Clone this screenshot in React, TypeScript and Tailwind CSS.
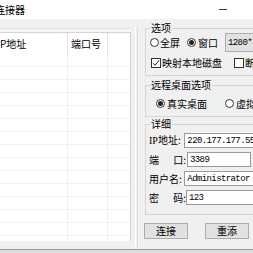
import React from 'react';

const cjk = "font-['Noto_Sans_CJK_SC',sans-serif]";
const mono = "font-['Liberation_Mono',monospace]";

function Radio({ checked = false }: { checked?: boolean }) {
  return (
    <span className="w-[9px] h-[9px] rounded-full border border-[#333] bg-white flex items-center justify-center shrink-0">
      {checked && <span className="w-[5px] h-[5px] rounded-full bg-[#222]" />}
    </span>
  );
}

function Check({ checked = false }: { checked?: boolean }) {
  return (
    <span className="w-[10px] h-[10px] border border-[#333] bg-white flex items-center justify-center shrink-0">
      {checked && (
        <svg width="8" height="8" viewBox="0 0 8 8" fill="none">
          <path d="M1 4.2 L3 6.2 L7 1.5" stroke="#222" strokeWidth="1" />
        </svg>
      )}
    </span>
  );
}

function Group({ label, className, children }: { label: string; className: string; children: React.ReactNode }) {
  return (
    <div className={`relative border border-[#d5d5d5] ${className}`}>
      <span className="absolute -top-[7px] left-[4px] bg-[#f0f0f0] px-[1px] text-[10px] leading-[12px]">{label}</span>
      {children}
    </div>
  );
}

function Field({ label, value, width }: { label: React.ReactNode; value: string; width: string }) {
  return (
    <div className="flex items-center h-[15px] mt-[4px] first:mt-0 pl-[3px]">
      <div className="w-[38px] flex text-[10px] leading-[12px]">{label}</div>
      <div className={`${width} h-[15px] bg-white border border-[#9a9a9a] flex items-center pl-[2px] ${mono} text-[9px] tracking-[-0.6px] whitespace-nowrap overflow-hidden`}>
        {value}
      </div>
    </div>
  );
}

export default function App() {
  const rows = Array.from({ length: 15 });
  return (
    <div className={`w-[253px] h-[253px] overflow-hidden bg-[#f0f0f0] text-black flex flex-col ${cjk}`}>
      <div className="h-[19px] bg-white flex items-center justify-between shrink-0">
        <span className="ml-[-5px] text-[10px] leading-[12px] whitespace-nowrap">连接器</span>
        <span className="mr-[26px] w-[8px] h-px bg-[#333]" />
      </div>

      <div className="h-[230px] flex shrink-0">
        <div className="w-[131px] flex flex-col pt-[9px] shrink-0">
          <div className="h-px bg-[#dcdcdc]" />
          <div className="h-[3px] bg-[#f6f6f6]" />
          <div className="h-[209px] bg-white border-t border-r border-[#d4d4d4] overflow-hidden flex flex-col">
            <div className="h-[21px] flex shrink-0 text-[10px] leading-[12px]">
              <div className="w-[68px] border-r border-[#e5e5e5] flex items-center">
                <span className="ml-[-3px] whitespace-nowrap">IP地址</span>
              </div>
              <div className="w-[40px] border-r border-[#e5e5e5] flex items-center pl-[3px]">端口号</div>
              <div className="flex-1" />
            </div>
            {rows.map((_, i) => (
              <div key={i} className="h-[13px] flex shrink-0 border-b border-[#f0f0f0]">
                <div className="w-[68px] border-r border-[#f0f0f0]" />
                <div className="w-[40px] border-r border-[#f0f0f0]" />
                <div className="flex-1" />
              </div>
            ))}
          </div>
        </div>

        <div className="w-[14px] flex pt-[8px] shrink-0">
          <div className="w-[4px]" />
          <div className="w-px bg-white" />
          <div className="w-px" />
          <div className="w-px bg-[#dcdcdc]" />
        </div>

        <div className="w-[115px] flex flex-col shrink-0 text-[10px] leading-[12px]">
          <Group label="选项" className="mt-[9px] h-[48px]">
            <div className="mt-[4px] h-[19px] flex items-center pl-[4px] whitespace-nowrap">
              <Radio />
              <span className="ml-[1px]">全屏</span>
              <span className="ml-[7px]"><Radio checked /></span>
              <span className="ml-[2px]">窗口</span>
              <div className={`ml-[7px] w-[50px] h-[19px] shrink-0 bg-[#e1e1e1] border border-[#adadad] flex items-center pl-[2px] ${mono} text-[9px] tracking-[-0.6px]`}>
                1280*720
              </div>
            </div>
            <div className="mt-[4px] h-[13px] flex items-center pl-[5px] whitespace-nowrap">
              <Check checked />
              <span className="ml-[1px]">映射本地磁盘</span>
              <span className="ml-[12px]"><Check /></span>
              <span className="ml-[1px]">断开重连</span>
            </div>
          </Group>

          <Group label="远程桌面选项" className="mt-[9px] h-[32px]">
            <div className="mt-[11px] h-[13px] flex items-center pl-[10px] whitespace-nowrap">
              <Radio checked />
              <span className="ml-[2px]">真实桌面</span>
              <span className="ml-[18px]"><Radio /></span>
              <span className="ml-[2px]">虚拟桌面</span>
            </div>
          </Group>

          <Group label="详细" className="mt-[7px] h-[91px]">
            <div className="pt-[8px] flex flex-col">
              <Field
                label={<span className="whitespace-nowrap"><span className="font-['Liberation_Serif','Noto_Sans_CJK_SC',serif]">IP</span>地址:</span>}
                value="220.177.177.55"
                width="w-[80px]"
              />
              <Field label={<div className="w-[37px] flex justify-between"><span>端</span><span>口:</span></div>} value="3389" width="w-[64px]" />
              <Field label={<span className="whitespace-nowrap">用户名:</span>} value="Administrator" width="w-[80px]" />
              <Field label={<div className="w-[37px] flex justify-between"><span>密</span><span>码:</span></div>} value="123" width="w-[80px]" />
            </div>
          </Group>

          <div className="mt-[8px] flex">
            <button className="ml-[-1px] w-[44px] h-[16px] bg-[#e1e1e1] border border-[#adadad] text-[10px] leading-[12px] flex items-center justify-center">
              连接
            </button>
            <button className="ml-[17px] w-[44px] h-[16px] bg-[#e1e1e1] border border-[#adadad] text-[10px] leading-[12px] flex items-center justify-center">
              重添
            </button>
          </div>
        </div>
      </div>

      <div className="h-px bg-[#9a9a9a] shrink-0" />
      <div className="flex-1 bg-[#dcdcdc]" />
    </div>
  );
}
